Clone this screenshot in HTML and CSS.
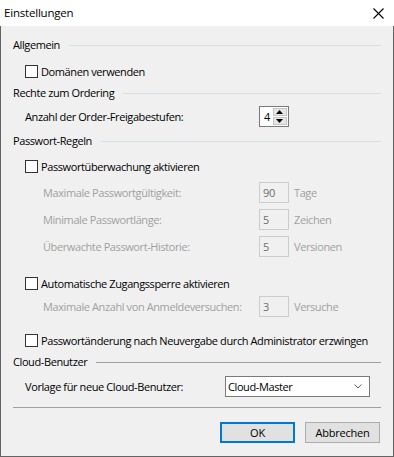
FILE: index.html
```html
<!DOCTYPE html>
<html lang="de">
<head>
<meta charset="utf-8">
<title>Einstellungen</title>
<link rel="stylesheet" href="styles.css">
</head>
<body>
<div class="window">
  <div class="titlebar">
    <span class="title">Einstellungen</span>
    <svg class="close" width="11" height="11" viewBox="0 0 11 11"><path d="M0.5 0.5 L10.5 10.5 M10.5 0.5 L0.5 10.5" stroke="#000" stroke-width="1.1" fill="none"/></svg>
  </div>
  <div class="content">
    <div class="group g1"><span class="gtitle">Allgemein</span><span class="gline blue"></span></div>
    <label class="check c1"><span class="box"></span><span>Domänen verwenden</span></label>

    <div class="group g2"><span class="gtitle">Rechte zum Ordering</span><span class="gline blue"></span></div>
    <div class="row r-spin">
      <span class="lbl lvl1">Anzahl der Order-Freigabestufen:</span>
      <div class="spin">
        <span class="spinval">4</span>
        <span class="spinbtns">
          <span class="sbtn"><svg width="7" height="4" viewBox="0 0 7 4"><path d="M0 4 L3.5 0 L7 4 Z" fill="#000"/></svg></span>
          <span class="sbtn"><svg width="7" height="4" viewBox="0 0 7 4"><path d="M0 0 L3.5 4 L7 0 Z" fill="#000"/></svg></span>
        </span>
      </div>
    </div>

    <div class="group g3"><span class="gtitle">Passwort-Regeln</span><span class="gline blue"></span></div>
    <label class="check c2"><span class="box"></span><span>Passwortüberwachung aktivieren</span></label>
    <div class="row r1"><span class="lbl lvl2 dis">Maximale Passwortgültigkeit:</span><span class="num">90</span><span class="unit">Tage</span></div>
    <div class="row r2"><span class="lbl lvl2 dis">Minimale Passwortlänge:</span><span class="num">5</span><span class="unit">Zeichen</span></div>
    <div class="row r3"><span class="lbl lvl2 dis">Überwachte Passwort-Historie:</span><span class="num">5</span><span class="unit">Versionen</span></div>

    <label class="check c3"><span class="box"></span><span>Automatische Zugangssperre aktivieren</span></label>
    <div class="row r4"><span class="lbl lvl2 dis">Maximale Anzahl von Anmeldeversuchen:</span><span class="num">3</span><span class="unit">Versuche</span></div>

    <label class="check c4"><span class="box"></span><span>Passwortänderung nach Neuvergabe durch Administrator erzwingen</span></label>

    <div class="group g4"><span class="gtitle">Cloud-Benutzer</span><span class="gline gray"></span></div>
    <div class="row r-combo">
      <span class="lbl lvl1 combolbl">Vorlage für neue Cloud-Benutzer:</span>
      <div class="combo">
        <span>Cloud-Master</span>
        <svg width="8" height="5" viewBox="0 0 8 5"><path d="M0.5 0.5 L4 4 L7.5 0.5" stroke="#606060" stroke-width="1" fill="none"/></svg>
      </div>
    </div>

    <div class="sep"></div>
    <div class="buttons">
      <button class="btn default">OK</button>
      <button class="btn">Abbrechen</button>
    </div>
  </div>
</div>
</body>
</html>
```
FILE: styles.css
```css
* { box-sizing: border-box; }
html, body { margin: 0; padding: 0; }
body {
  width: 394px;
  height: 457px;
  font-family: "Open Sans", "Noto Sans", sans-serif;
  font-size: 11px;
  letter-spacing: -0.4px;
  color: #000;
  background: #f0f0f0;
  overflow: hidden;
  white-space: nowrap;
}
.window {
  width: 394px;
  height: 457px;
  display: flex;
  flex-direction: column;
}
.titlebar {
  height: 26px;
  background: #fff;
  display: flex;
  align-items: center;
  justify-content: space-between;
  padding: 0 10px 0 4px;
  flex: none;
}
.title { font-size: 11.5px; line-height: 14px; letter-spacing: -0.2px; }
.close { display: block; }
.content {
  flex: 1;
  display: flex;
  flex-direction: column;
  padding: 0 12px 0 12px;
  border-left: 1px solid #646464;
  border-right: 1px solid #646464;
  border-bottom: 1px solid #646464;
}
.group {
  display: flex;
  align-items: center;
  height: 14px;
  line-height: 14px;
}
.gline { flex: 1; height: 1px; margin-left: 9px; }
.gline.blue { background: #d5dfe5; }
.gline.gray { background: #a0a0a0; }
.g1 { margin-top: 12px; }
.g2 { margin-top: 8px; }
.g3 { margin-top: 7px; }
.g4 { margin-top: 8px; }

.check {
  display: flex;
  align-items: center;
  height: 13px;
  padding-left: 12px;
  line-height: 13px;
}
.box {
  width: 13px;
  height: 13px;
  border: 1px solid #333;
  background: #fff;
  margin-right: 3px;
  flex: none;
}
.c1 { margin-top: 13px; }
.c2 { margin-top: 12px; }
.c3 { margin-top: 20px; }
.c4 { margin-top: 17px; }

.row {
  display: flex;
  align-items: center;
  height: 21px;
}
.lbl { width: 246px; flex: none; }
.lvl1 { padding-left: 12px; }
.lvl2 { padding-left: 30px; }
.combolbl { width: 212px; }
.dis { color: #a0a0a0; }
.r-spin { margin-top: 6px; }
.r1 { margin-top: 9px; }
.r2 { margin-top: 6px; }
.r3 { margin-top: 6px; }
.r4 { margin-top: 6px; }
.r-combo { margin-top: 7px; }

.num {
  width: 30px;
  height: 21px;
  border: 1px solid #cccccc;
  background: #f0f0f0;
  color: #6d6d6d;
  padding-left: 3px;
  line-height: 19px;
  flex: none;
}
.unit { margin-left: 5px; color: #a0a0a0; }

.spin {
  width: 30px;
  height: 21px;
  border: 1px solid #7a7a7a;
  background: #fff;
  display: flex;
  align-items: center;
  padding: 1px;
  flex: none;
}
.spinval { width: 12px; padding-left: 3px; line-height: 17px; }
.spinbtns {
  display: flex;
  flex-direction: column;
  width: 15px;
  height: 17px;
  gap: 1px;
}
.sbtn {
  flex: 1;
  background: #e6e6e6;
  border: 1px solid #c6c6c6;
  display: flex;
  align-items: center;
  justify-content: center;
}
.sbtn svg { display: block; }

.combo {
  width: 145px;
  height: 21px;
  border: 1px solid #7a7a7a;
  background: #fff;
  display: flex;
  align-items: center;
  justify-content: space-between;
  padding: 0 7px 0 2px;
  flex: none;
}
.combo svg { display: block; }

.sep {
  height: 1px;
  background: #a0a0a0;
  margin-top: 10px;
  flex: none;
}
.buttons {
  display: flex;
  justify-content: flex-end;
  gap: 10px;
  margin-top: 14px;
  padding-right: 1px;
}
.btn {
  width: 75px;
  height: 21px;
  font-family: inherit;
  font-size: 11px;
  letter-spacing: -0.2px;
  color: #000;
  background: #e1e1e1;
  border: 1px solid #adadad;
  padding: 0;
  margin: 0;
}
.btn.default { border: 2px solid #0078d7; }
```
